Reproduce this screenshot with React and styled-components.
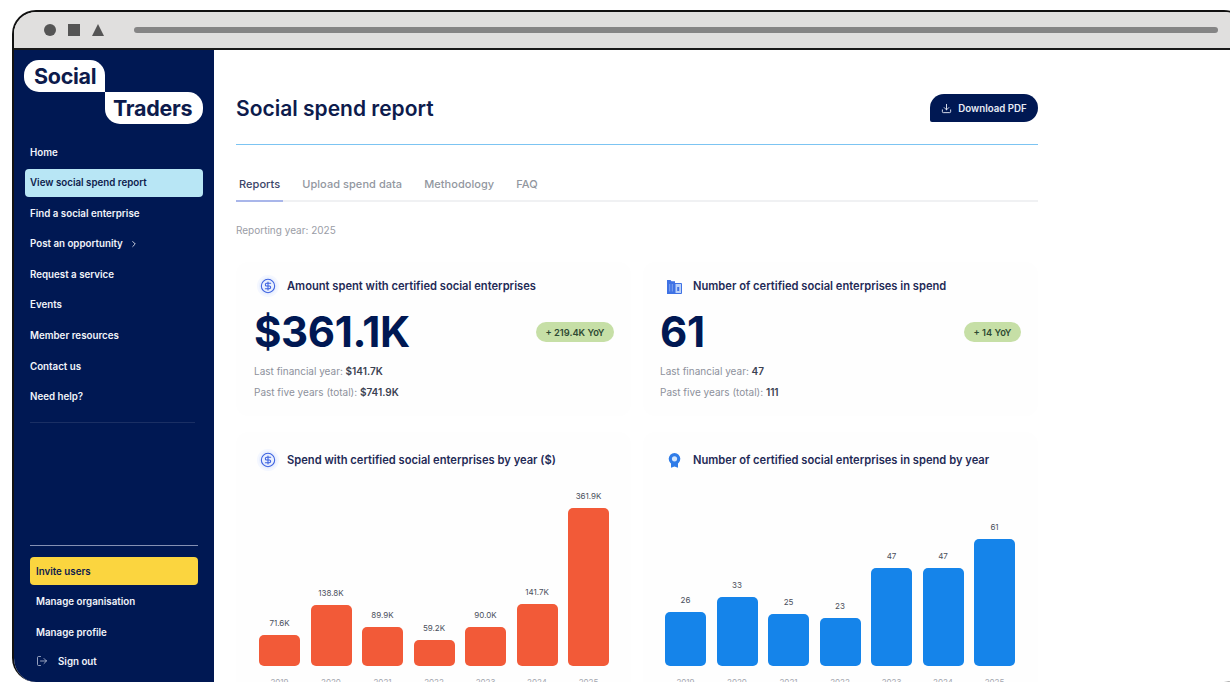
import React from 'react';
import styled, { createGlobalStyle } from 'styled-components';
import { ChevronRight, CircleDollarSign, Download, LogOut } from 'lucide-react';

const navy = '#001853';
const ink = '#0d1b4c';

const GlobalStyle = createGlobalStyle`
  html, body {
    margin: 0;
    height: 682px;
    overflow: hidden;
    background: #fff;
    font-family: Inter, "Liberation Sans", sans-serif;
  }
  * { box-sizing: border-box; }
`

const BrowserWindow = styled.div`
  margin: 10px 0 0 12px;
  width: 1236px;
  height: 672px;
  display: flex;
  flex-direction: column;
  border: 2px solid #111;
  border-bottom: 0;
  border-radius: 24px;
  overflow: hidden;
  background: #fff;
`

const TitleBar = styled.div`
  flex: none;
  height: 38px;
  padding: 0 28px 0 30px;
  display: flex;
  align-items: center;
  background: #e0dfde;
  border-bottom: 2px solid #1a1a1a;
`

const Controls = styled.div`
  display: flex;
  align-items: center;
  gap: 12px;
  margin-right: 30px;
`

const Dot = styled.span`
  width: 12px;
  height: 12px;
  border-radius: 50%;
  background: #555;
`

const Square = styled.span`
  width: 12px;
  height: 12px;
  background: #555;
`

const Triangle = styled.span`
  width: 0;
  height: 0;
  border-left: 6px solid transparent;
  border-right: 6px solid transparent;
  border-bottom: 12px solid #555;
`

const AddressBar = styled.div`
  flex: 1;
  height: 6px;
  border-radius: 3px;
  background: #858585;
`

const Body = styled.div`
  flex: 1;
  min-height: 0;
  display: flex;
`

const Sidebar = styled.aside`
  flex: none;
  width: 200px;
  padding: 10px 11px 7px;
  display: flex;
  flex-direction: column;
  background: ${navy};
`

const Logo = styled.div`
  margin-left: -1px;
  display: flex;
  flex-direction: column;
  align-items: flex-start;
`

const LogoWord = styled.span`
  height: 32px;
  padding: 0 ${props => (props.$second ? '8px' : '10px')};
  display: flex;
  align-items: center;
  margin-left: ${props => (props.$second ? '81px' : '0')};
  width: ${props => (props.$second ? '98px' : '81px')};
  background: #fff;
  color: ${ink};
  font-size: 21.5px;
  font-weight: 700;
  letter-spacing: -0.3px;
  border-radius: ${props => (props.$second ? '0 15px 15px 15px' : '15px 15px 0 15px')};
`

const NavList = styled.nav`
  margin-top: 14px;
  display: flex;
  flex-direction: column;
  gap: 2.6px;
`

const NavItem = styled.a`
  height: 28px;
  padding-left: ${props => (props.$tight ? '6px' : '5px')};
  display: flex;
  align-items: center;
  gap: 6px;
  border-radius: 4px;
  font-size: 9.75px;
  font-weight: 600;
  color: ${props => (props.$active || props.$invite ? ink : '#f2f4fa')};
  background: ${props => (props.$active ? '#b8e6f5' : props.$invite ? '#fbd53f' : 'transparent')};
`

const FaintRule = styled.hr`
  width: 165px;
  margin: 11px 0 0 5px;
  border: 0;
  border-top: 1px solid rgba(255, 255, 255, 0.1);
`

const Footer = styled.div`
  margin-top: auto;
  padding: 0 5px 0 5px;
  display: flex;
  flex-direction: column;
  gap: 2.6px;
`

const FooterRule = styled.hr`
  width: 100%;
  margin: 0 0 9px;
  border: 0;
  border-top: 1px solid #8490b4;
`

const SignOut = styled(NavItem)`
  margin-top: -2px;
`

const SignOutLabel = styled.span`
  margin-left: 4px;
`

const Main = styled.main`
  flex: 1;
  padding: 44px 0 0 22px;
  overflow: hidden;
`

const Content = styled.div`
  width: 802px;
`

const PageHeader = styled.header`
  height: 28px;
  display: flex;
  align-items: center;
  justify-content: space-between;
`

const PageTitle = styled.h1`
  margin: 0;
  font-size: 21px;
  font-weight: 600;
  color: ${ink};
`

const DownloadButton = styled.button`
  width: 108px;
  height: 28px;
  padding: 0;
  display: flex;
  align-items: center;
  justify-content: center;
  gap: 6px;
  border: 0;
  border-radius: 14px 14px 14px 2px;
  background: ${navy};
  color: #e8ecf6;
  font: 600 9.7px Inter, "Liberation Sans", sans-serif;
`

const HeaderRule = styled.hr`
  margin: 22px 0 0;
  border: 0;
  border-top: 1px solid #7cc4f2;
`

const Tabs = styled.div`
  margin-top: 30px;
  display: flex;
  gap: 16px;
  border-bottom: 2px solid #f0f1f3;
`

const Tab = styled.div`
  padding: 0 3px 7px;
  margin-bottom: -2px;
  font-size: 11px;
  font-weight: 500;
  line-height: 18px;
  letter-spacing: 0.05px;
  color: ${props => (props.$active ? '#3a4468' : '#92979f')};
  border-bottom: 2px solid ${props => (props.$active ? '#a9b6ea' : 'transparent')};
`

const ReportingYear = styled.div`
  margin-top: 21px;
  font-size: 10px;
  line-height: 14px;
  color: #9a9da6;
`

const CardGrid = styled.div`
  margin-top: 25px;
  display: grid;
  grid-template-columns: 1fr 1fr;
  gap: 16px 12px;
`

const Card = styled.section`
  padding: ${props => (props.$chart ? '18px' : '14px')} 17px 17px ${props => props.$inset}px;
  border-radius: 12px;
  background: #fefefe;
`

const CardHeading = styled.div`
  height: 20px;
  padding-left: 5px;
  display: flex;
  align-items: center;
  gap: 10px;
  font-size: 11.17px;
  font-weight: 600;
  color: #1f2a56;
`

const IconSlot = styled.span`
  flex: none;
  width: 18px;
  height: 18px;
  display: flex;
  align-items: center;
  justify-content: center;
  border-radius: 50%;
  background: ${props => (props.$halo ? '#eaf0fe' : 'transparent')};
  box-shadow: ${props => (props.$halo ? '0 0 0 2px #f4f7ff' : 'none')};
  color: #3d62e0;
`

const StatRow = styled.div`
  margin-top: 13px;
  display: flex;
  align-items: center;
  justify-content: space-between;
`

const StatValue = styled.div`
  font-size: 42px;
  font-weight: 700;
  line-height: 46px;
  letter-spacing: -0.4px;
  color: ${navy};
`

const YoyPill = styled.span`
  height: 20px;
  padding: 0 9.5px;
  display: flex;
  align-items: center;
  border-radius: 10px;
  background: #c6dfa6;
  color: #2e4a33;
  font-size: 9.3px;
  font-weight: 600;
`

const StatNotes = styled.div`
  margin-top: 9px;
  display: flex;
  flex-direction: column;
  gap: 7px;
`

const StatNote = styled.div`
  font-size: 10px;
  line-height: 14px;
  color: #8d919c;

  b {
    font-weight: 600;
    color: #3b4252;
  }
`

const Chart = styled.div`
  height: 218px;
  padding-left: 5px;
  display: flex;
  align-items: flex-end;
  gap: 10.5px;
`

const ChartColumn = styled.div`
  width: 41px;
  display: flex;
  flex-direction: column;
  align-items: center;
`

const BarValue = styled.span`
  margin-bottom: 6px;
  font-size: 8px;
  line-height: 12px;
  white-space: nowrap;
  color: #4a4f5c;
`

const Bar = styled.div`
  width: 100%;
  border-radius: 5px;
  background: ${props => props.$color};
`

const YearLabel = styled.span`
  margin-top: 10px;
  font-size: 8px;
  line-height: 12px;
  color: #a4a7af;
`

const BuildingIcon = () => (
  <svg width="15" height="15" viewBox="0 0 15 15" fill="none">
    <path d="M0 1h3.5l1 1.2H8V15H0z" fill="#3f72e4" />
    <path d="M8 4.5h6.5V14.5H8z" fill="#bcd2fa" stroke="#3f72e4" />
    <path d="M10.2 8h2v4h-2z" fill="#3f72e4" />
    <path d="M2.7 5v7.5M5.3 5v7.5" stroke="#8fb0f2" strokeWidth="0.8" />
  </svg>
)

const BadgeIcon = () => (
  <svg width="13" height="15" viewBox="0 0 13 15" fill="none">
    <path d="M3 9.5v5.2l3.5-1.2 3.5 1.2V9.5z" fill="#2f7ce8" />
    <circle cx="6.5" cy="5.8" r="5.8" fill="#2f7ce8" />
    <circle cx="6.5" cy="5.8" r="2.6" fill="#d3e6fd" />
  </svg>
)

const spendBars = [
  { year: '2019', label: '71.6K', value: 71.6 },
  { year: '2020', label: '138.8K', value: 138.8 },
  { year: '2021', label: '89.9K', value: 89.9 },
  { year: '2022', label: '59.2K', value: 59.2 },
  { year: '2023', label: '90.0K', value: 90 },
  { year: '2024', label: '141.7K', value: 141.7 },
  { year: '2025', label: '361.9K', value: 361.9 },
];

const countBars = [
  { year: '2019', label: '26', value: 26 },
  { year: '2020', label: '33', value: 33 },
  { year: '2021', label: '25', value: 25 },
  { year: '2022', label: '23', value: 23 },
  { year: '2023', label: '47', value: 47 },
  { year: '2024', label: '47', value: 47 },
  { year: '2025', label: '61', value: 61 },
];

const navItems = [
  'Home',
  'View social spend report',
  'Find a social enterprise',
  'Post an opportunity',
  'Request a service',
  'Events',
  'Member resources',
  'Contact us',
  'Need help?',
];

const BarChart = ({bars, color, scale}) => {
  return (
    <Chart>
      {bars.map(bar => (
        <ChartColumn key={bar.year}>
          <BarValue>{bar.label}</BarValue>
          <Bar $color={color} style={{height: bar.value * scale}} />
          <YearLabel>{bar.year}</YearLabel>
        </ChartColumn>
      ))}
    </Chart>
  )
}

const StatCard = ({inset, icon, halo, title, value, change, lastYear, fiveYears}) => {
  return (
    <Card $inset={inset}>
      <CardHeading>
        <IconSlot $halo={halo}>{icon}</IconSlot>
        {title}
      </CardHeading>
      <StatRow>
        <StatValue>{value}</StatValue>
        <YoyPill>{change}</YoyPill>
      </StatRow>
      <StatNotes>
        <StatNote>Last financial year: <b>{lastYear}</b></StatNote>
        <StatNote>Past five years (total): <b>{fiveYears}</b></StatNote>
      </StatNotes>
    </Card>
  )
}

const ChartCard = ({inset, icon, halo, title, children}) => {
  return (
    <Card $chart $inset={inset}>
      <CardHeading>
        <IconSlot $halo={halo}>{icon}</IconSlot>
        {title}
      </CardHeading>
      {children}
    </Card>
  )
}

const App = () => {
  return (
    <>
      <GlobalStyle />
      <BrowserWindow>
        <TitleBar>
          <Controls>
            <Dot />
            <Square />
            <Triangle />
          </Controls>
          <AddressBar />
        </TitleBar>
        <Body>
          <Sidebar>
            <Logo>
              <LogoWord>Social</LogoWord>
              <LogoWord $second>Traders</LogoWord>
            </Logo>
            <NavList>
              {navItems.map(item => (
                <NavItem key={item} $active={item === 'View social spend report'}>
                  {item}
                  {item === 'Post an opportunity' && <ChevronRight size={10} />}
                </NavItem>
              ))}
            </NavList>
            <FaintRule />
            <Footer>
              <FooterRule />
              <NavItem $invite $tight>Invite users</NavItem>
              <NavItem $tight>Manage organisation</NavItem>
              <NavItem $tight>Manage profile</NavItem>
              <SignOut $tight>
                <LogOut size={12} strokeWidth={1.5} color="#c5cce0" />
                <SignOutLabel>Sign out</SignOutLabel>
              </SignOut>
            </Footer>
          </Sidebar>
          <Main>
            <Content>
              <PageHeader>
                <PageTitle>Social spend report</PageTitle>
                <DownloadButton>
                  <Download size={11} />
                  Download PDF
                </DownloadButton>
              </PageHeader>
              <HeaderRule />
              <Tabs>
                <Tab $active>Reports</Tab>
                <Tab>Upload spend data</Tab>
                <Tab>Methodology</Tab>
                <Tab>FAQ</Tab>
              </Tabs>
              <ReportingYear>Reporting year: 2025</ReportingYear>
              <CardGrid>
                <StatCard
                  inset={18}
                  halo
                  icon={<CircleDollarSign size={16} strokeWidth={1.6} />}
                  title="Amount spent with certified social enterprises"
                  value="$361.1K"
                  change="+ 219.4K YoY"
                  lastYear="$141.7K"
                  fiveYears="$741.9K"
                />
                <StatCard
                  inset={17}
                  icon={<BuildingIcon />}
                  title="Number of certified social enterprises in spend"
                  value="61"
                  change="+ 14 YoY"
                  lastYear="47"
                  fiveYears="111"
                />
                <ChartCard
                  inset={18}
                  halo
                  icon={<CircleDollarSign size={16} strokeWidth={1.6} />}
                  title="Spend with certified social enterprises by year ($)"
                >
                  <BarChart bars={spendBars} color="#f25a38" scale={0.4366} />
                </ChartCard>
                <ChartCard
                  inset={17}
                  icon={<BadgeIcon />}
                  title="Number of certified social enterprises in spend by year"
                >
                  <BarChart bars={countBars} color="#1584ea" scale={2.08} />
                </ChartCard>
              </CardGrid>
            </Content>
          </Main>
        </Body>
      </BrowserWindow>
    </>
  );
}

export default App;
